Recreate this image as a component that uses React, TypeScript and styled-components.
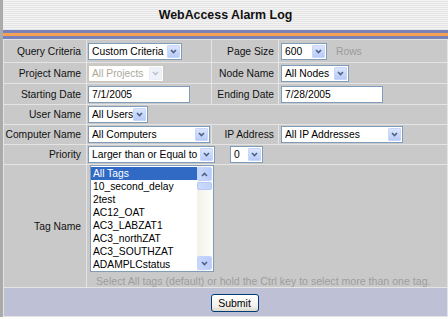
import { FC } from 'react';
import styled, { createGlobalStyle } from 'styled-components';

const GlobalStyle = createGlobalStyle`
  body {
    margin: 0;
    background: #fff;
    font-family: "Liberation Sans", Arial, sans-serif;
  }
`;

const tags = [
  'All Tags',
  '10_second_delay',
  '2test',
  'AC12_OAT',
  'AC3_LABZAT1',
  'AC3_northZAT',
  'AC3_SOUTHZAT',
  'ADAMPLCstatus',
];

const Chevron: FC<{ up?: boolean; color?: string }> = ({ up, color = '#4d6185' }) => (
  <svg width="7" height="5" viewBox="0 0 7 5">
    <path
      d={up ? 'M1 4 L3.5 1.5 L6 4' : 'M1 1 L3.5 3.5 L6 1'}
      fill="none"
      stroke={color}
      strokeWidth="1.6"
    />
  </svg>
);

const Select: FC<{ value: string; width: number; disabled?: boolean }> = ({ value, width, disabled }) => (
  <SelectBox $w={width} $disabled={disabled}>
    <SelectText $disabled={disabled}>{value}</SelectText>
    <ArrowBtn $disabled={disabled}>
      <Chevron color={disabled ? '#b9c3d6' : '#4d6185'} />
    </ArrowBtn>
  </SelectBox>
);

const App: FC = () => {
  return (
    <Page>
      <GlobalStyle />
      <Header>WebAccess Alarm Log</Header>
      <Band />
      <Form>
        <colgroup>
          <col style={{ width: 82 }} />
          <col style={{ width: 124 }} />
          <col style={{ width: 66 }} />
          <col />
        </colgroup>
        <tbody>
          <Row $h={22}>
            <Label>Query Criteria</Label>
            <Value>
              <Select value="Custom Criteria" width={94} />
            </Value>
            <Label $right>Page Size</Label>
            <Value $wide>
              <Select value="600" width={46} />
              <Hint>Rows</Hint>
            </Value>
          </Row>
          <Row $h={20}>
            <Label>Project Name</Label>
            <Value>
              <Select value="All Projects" width={76} disabled />
            </Value>
            <Label $right>Node Name</Label>
            <Value $wide>
              <Select value="All Nodes" width={68} />
            </Value>
          </Row>
          <Row $h={20}>
            <Label>Starting Date</Label>
            <Value>
              <TextBox>7/1/2005</TextBox>
            </Value>
            <Label $right>Ending Date</Label>
            <Value $wide>
              <TextBox>7/28/2005</TextBox>
            </Value>
          </Row>
          <Row $h={19}>
            <Label>User Name</Label>
            <Value colSpan={3}>
              <Select value="All Users" width={60} />
            </Value>
          </Row>
          <Row $h={19}>
            <Label>Computer Name</Label>
            <Value>
              <Select value="All Computers" width={122} />
            </Value>
            <Label $right>IP Address</Label>
            <Value $wide>
              <Select value="All IP Addresses" width={122} />
            </Value>
          </Row>
          <Row $h={19}>
            <Label>Priority</Label>
            <Value colSpan={3}>
              <Select value="Larger than or Equal to" width={127} />
              <Spacer />
              <Select value="0" width={33} />
            </Value>
          </Row>
          <Row $h={122}>
            <Label>Tag Name</Label>
            <TagCell colSpan={3}>
              <ListBox>
                <Items>
                  {tags.map((t, i) => (
                    <Item key={t} $selected={i === 0}>
                      {t}
                    </Item>
                  ))}
                </Items>
                <ScrollBar>
                  <ScrollBtn>
                    <Chevron up />
                  </ScrollBtn>
                  <Thumb />
                  <Track />
                  <ScrollBtn>
                    <Chevron />
                  </ScrollBtn>
                </ScrollBar>
              </ListBox>
              <Help>Select All tags (default) or hold the Ctrl key to select more than one tag.</Help>
            </TagCell>
          </Row>
          <Row $h={28}>
            <SubmitCell colSpan={4}>
              <SubmitButton>Submit</SubmitButton>
            </SubmitCell>
          </Row>
        </tbody>
      </Form>
    </Page>
  );
};

export default App;

const Page = styled.div`
  width: 445px;
  border-left: 3px solid #ababab;
`;

const Header = styled.div`
  height: 30px;
  display: flex;
  align-items: center;
  justify-content: center;
  background: repeating-linear-gradient(180deg, #f3f3f3 0 1px, #e5e5e5 1px 2px);
  font-size: 12.4px;
  font-weight: bold;
  color: #111;
`;

const Band = styled.div`
  height: 9px;
  background: linear-gradient(180deg, #7b82b9 0 3px, #f7a152 3px 6px, #7b82b9 6px 9px);
`;

const Form = styled.table`
  width: 445px;
  table-layout: fixed;
  border-collapse: separate;
  border-spacing: 1px;
  background: #e4e4e4;
  font-size: 10.3px;
  color: #111;
`;

const Row = styled.tr<{ $h: number }>`
  height: ${(p) => p.$h}px;
`;

const Label = styled.td<{ $right?: boolean }>`
  background: #c9c9c9;
  text-align: right;
  vertical-align: middle;
  padding: 0 ${(p) => (p.$right ? 4 : 5)}px 0 0;
  white-space: nowrap;
`;

const Value = styled.td<{ $wide?: boolean }>`
  background: #c9c9c9;
  vertical-align: middle;
  padding: 0 0 0 ${(p) => (p.$wide ? 2 : 1)}px;
  white-space: nowrap;
`;

const SelectBox = styled.div<{ $w: number; $disabled?: boolean }>`
  display: inline-flex;
  align-items: center;
  box-sizing: border-box;
  width: ${(p) => p.$w}px;
  height: 17px;
  padding: 1px;
  border: 1px solid ${(p) => (p.$disabled ? '#c9c7ba' : '#7f9db9')};
  background: #fff;
  vertical-align: middle;
`;

const SelectText = styled.span<{ $disabled?: boolean }>`
  flex: 1;
  padding-left: 2px;
  line-height: 13px;
  overflow: hidden;
  white-space: nowrap;
  color: ${(p) => (p.$disabled ? '#aca899' : '#000')};
`;

const ArrowBtn = styled.span<{ $disabled?: boolean }>`
  display: flex;
  flex: none;
  align-items: center;
  justify-content: center;
  box-sizing: border-box;
  width: 13px;
  height: 13px;
  border: 1px solid ${(p) => (p.$disabled ? '#e8edf8' : '#c7d6fb')};
  border-radius: 1px;
  background: ${(p) => (p.$disabled ? '#eef1f8' : 'linear-gradient(180deg, #dbe5fc, #b7cbf7)')};
`;

const Hint = styled.span`
  margin-left: 9px;
  color: #9b9b9b;
  vertical-align: middle;
`;

const Spacer = styled.span`
  display: inline-block;
  width: 15px;
`;

const TextBox = styled.div`
  display: inline-flex;
  align-items: center;
  box-sizing: border-box;
  width: 102px;
  height: 17px;
  padding-left: 3px;
  border: 1px solid #7f9db9;
  background: #fff;
  color: #000;
  vertical-align: middle;
`;

const TagCell = styled.td`
  background: #c9c9c9;
  vertical-align: top;
  padding: 0 0 0 3px;
`;

const ListBox = styled.div`
  display: flex;
  box-sizing: border-box;
  width: 124px;
  height: 107px;
  border: 1px solid #7f9db9;
  background: #fff;
`;

const Items = styled.div`
  flex: 1;
  padding-top: 1px;
  overflow: hidden;
`;

const Item = styled.div<{ $selected?: boolean }>`
  height: 13px;
  line-height: 13px;
  padding-left: 2px;
  white-space: nowrap;
  color: ${(p) => (p.$selected ? '#fff' : '#000')};
  background: ${(p) => (p.$selected ? '#316ac5' : 'transparent')};
`;

const ScrollBar = styled.div`
  display: flex;
  flex-direction: column;
  width: 16px;
  padding: 1px 1px 1px 0;
  box-sizing: border-box;
  background: linear-gradient(90deg, #f3f1e8, #fdfdfa);
`;

const ScrollBtn = styled.div`
  display: flex;
  align-items: center;
  justify-content: center;
  height: 14px;
  box-sizing: border-box;
  border: 1px solid #c3d3fd;
  border-radius: 2px;
  background: linear-gradient(90deg, #c8d7fc, #b9cbf6);
`;

const Thumb = styled.div`
  height: 8px;
  margin-top: 1px;
  box-sizing: border-box;
  border: 1px solid #b6c8f5;
  border-radius: 2px;
  background: linear-gradient(90deg, #cddafc, #c0d0f8);
`;

const Track = styled.div`
  flex: 1;
`;

const Help = styled.div`
  margin-top: 3px;
  padding-left: 6px;
  font-size: 10.6px;
  color: #9d9d9d;
  white-space: nowrap;
`;

const SubmitCell = styled.td`
  background: #bec0d6;
  text-align: center;
  vertical-align: middle;
  padding: 2px 0 0 18px;
`;

const SubmitButton = styled.button`
  width: 48px;
  height: 18px;
  padding: 0;
  border: 1px solid #003c74;
  border-radius: 3px;
  background: linear-gradient(180deg, #ffffff, #f2f1ec 70%, #dcd8cc);
  font-family: "Liberation Sans", Arial, sans-serif;
  font-size: 10.5px;
  color: #000;
`;
